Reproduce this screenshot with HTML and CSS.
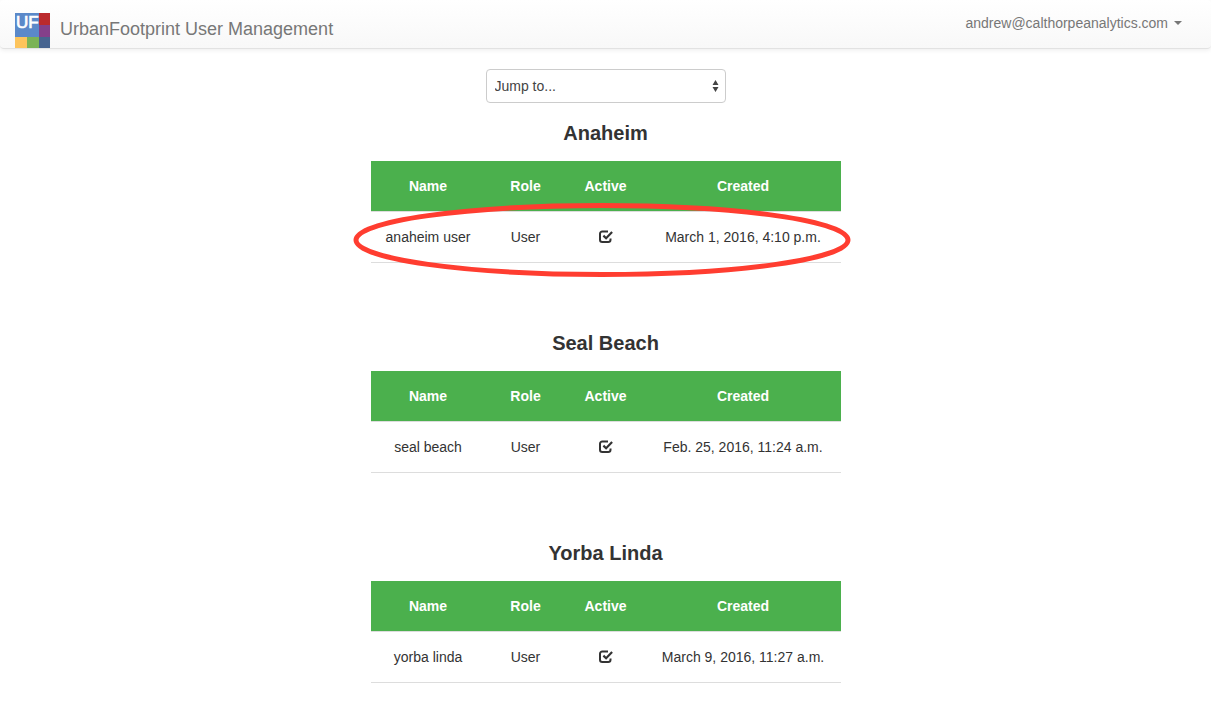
FILE: index.html
```html
<!DOCTYPE html>
<html lang="en">
<head>
<meta charset="utf-8">
<meta name="viewport" content="width=device-width, initial-scale=1">
<title>UrbanFootprint User Management</title>
<link rel="stylesheet" href="styles.css">
</head>
<body>
<svg class="sprite" aria-hidden="true">
  <symbol id="icon-check" viewBox="0 0 14 14">
    <path d="M9 1.500H3.300A2.300 2.300 0 0 0 1 3.800v6a2.300 2.300 0 0 0 2.300 2.300h5.900A2.300 2.300 0 0 0 11.500 9.800V8.600" fill="none" stroke="currentColor" stroke-width="2"/>
    <path d="M4.400 5.600L7.100 8.200L13.100 2" fill="none" stroke="currentColor" stroke-width="2.200"/>
  </symbol>
</svg>
<header class="navbar">
  <a class="brand" href="#">
    <svg class="logo" viewBox="0 0 35 35" role="img" aria-label="UF">
      <rect width="24" height="24" fill="#5b89c9"/>
      <rect x="24" width="11" height="12" fill="#bb2a2d"/>
      <rect x="24" y="12" width="11" height="12" fill="#84408a"/>
      <rect y="24" width="12" height="11" fill="#fdc45c"/>
      <rect x="12" y="24" width="12" height="11" fill="#7bb356"/>
      <rect x="24" y="24" width="11" height="11" fill="#47648f"/>
      <text class="logo-text" x="1" y="15">UF</text>
    </svg>
    <span>UrbanFootprint User Management</span>
  </a>
  <button class="account" type="button">andrew@calthorpeanalytics.com<span class="caret"></span></button>
</header>
<main class="content">
  <div class="jump">
    <select class="jump-select" aria-label="Jump to">
      <option>Jump to...</option>
      <option>Anaheim</option>
      <option>Seal Beach</option>
      <option>Yorba Linda</option>
    </select>
    <svg class="jump-arrows" viewBox="0 0 7 12" aria-hidden="true"><path d="M0.500 5L3.500 0L6.500 5ZM0.500 7H6.500L3.500 12Z" fill="#444"/></svg>
  </div>
  <section class="group">
    <h2 class="group-title">Anaheim</h2>
    <table class="users">
      <thead><tr><th class="col-name">Name</th><th class="col-role">Role</th><th class="col-active">Active</th><th>Created</th></tr></thead>
      <tbody><tr><td>anaheim user</td><td>User</td><td><svg class="check" role="img" aria-label="Active"><use href="#icon-check"/></svg></td><td>March 1, 2016, 4:10 p.m.</td></tr></tbody>
    </table>
    <svg class="highlight" viewBox="0 0 498 76" aria-hidden="true"><ellipse cx="249" cy="38" rx="246" ry="34.500" fill="none" stroke="#ff3d30" stroke-width="5"/></svg>
  </section>
  <section class="group">
    <h2 class="group-title">Seal Beach</h2>
    <table class="users">
      <thead><tr><th class="col-name">Name</th><th class="col-role">Role</th><th class="col-active">Active</th><th>Created</th></tr></thead>
      <tbody><tr><td>seal beach</td><td>User</td><td><svg class="check" role="img" aria-label="Active"><use href="#icon-check"/></svg></td><td>Feb. 25, 2016, 11:24 a.m.</td></tr></tbody>
    </table>
  </section>
  <section class="group">
    <h2 class="group-title">Yorba Linda</h2>
    <table class="users">
      <thead><tr><th class="col-name">Name</th><th class="col-role">Role</th><th class="col-active">Active</th><th>Created</th></tr></thead>
      <tbody><tr><td>yorba linda</td><td>User</td><td><svg class="check" role="img" aria-label="Active"><use href="#icon-check"/></svg></td><td>March 9, 2016, 11:27 a.m.</td></tr></tbody>
    </table>
  </section>
</main>
</body>
</html>
```
FILE: styles.css
```css
* {
  box-sizing: border-box;
}

body {
  margin: 0;
  background: #fff;
  color: #333;
  font: 14px/20px "Helvetica Neue", "Liberation Sans", Arial, sans-serif;
}

.sprite {
  display: none;
}

.navbar {
  display: flex;
  justify-content: space-between;
  align-items: flex-start;
  padding: 0 29px 0 15px;
  border-bottom: 1px solid #e2e2e2;
  border-radius: 4px;
  background: linear-gradient(#fff, #f8f8f8);
  box-shadow: 0 1px 5px rgba(0, 0, 0, 0.08);
}

.brand {
  display: flex;
  align-items: flex-start;
  gap: 10px;
  padding-top: 13px;
  color: #777;
  font-size: 18px;
  line-height: 32px;
  text-decoration: none;
}

.logo {
  display: block;
  width: 35px;
  height: 35px;
}

.logo-text {
  fill: #fff;
  stroke: #fff;
  stroke-width: 0.7px;
  font-size: 17px;
}

.account {
  display: flex;
  align-items: center;
  gap: 6px;
  margin: 0;
  padding: 13px 0;
  border: 0;
  background: none;
  color: #777;
  font: inherit;
}

.caret {
  border: 4px solid transparent;
  border-top-color: currentColor;
  border-bottom: 0;
}

.content {
  display: flex;
  flex-direction: column;
  align-items: center;
  padding: 20px 15px 0;
}

.jump {
  position: relative;
  width: 240px;
  margin-bottom: 20px;
}

.jump-select {
  display: block;
  width: 100%;
  height: 34px;
  padding: 0 24px 0 8px;
  border: 1px solid #ccc;
  border-radius: 4px;
  background: #fff;
  color: #444;
  font: inherit;
  appearance: none;
}

.jump-arrows {
  position: absolute;
  top: 11px;
  right: 7px;
  width: 7px;
  height: 12px;
  pointer-events: none;
}

.group {
  position: relative;
  width: 100%;
  max-width: 470px;
  margin-bottom: 70px;
}

.group:last-child {
  margin-bottom: 0;
}

.group-title {
  margin: 0 0 18px;
  font-size: 20px;
  line-height: 20px;
  text-align: center;
}

.users {
  width: 100%;
  table-layout: fixed;
  border-spacing: 0;
  text-align: center;
}

.users th {
  padding: 15px 0;
  background: #4bb04d;
  color: #fff;
}

.users td {
  padding: 15px 0;
  border-top: 1px solid #ddd;
  border-bottom: 1px solid #ddd;
}

.col-name {
  width: 115px;
}

.col-role,
.col-active {
  width: 80px;
}

.check {
  display: block;
  width: 14px;
  height: 14px;
  margin: 0 auto;
}

.highlight {
  position: absolute;
  top: 79px;
  left: -18px;
  width: 498px;
  height: 76px;
  pointer-events: none;
}
```
